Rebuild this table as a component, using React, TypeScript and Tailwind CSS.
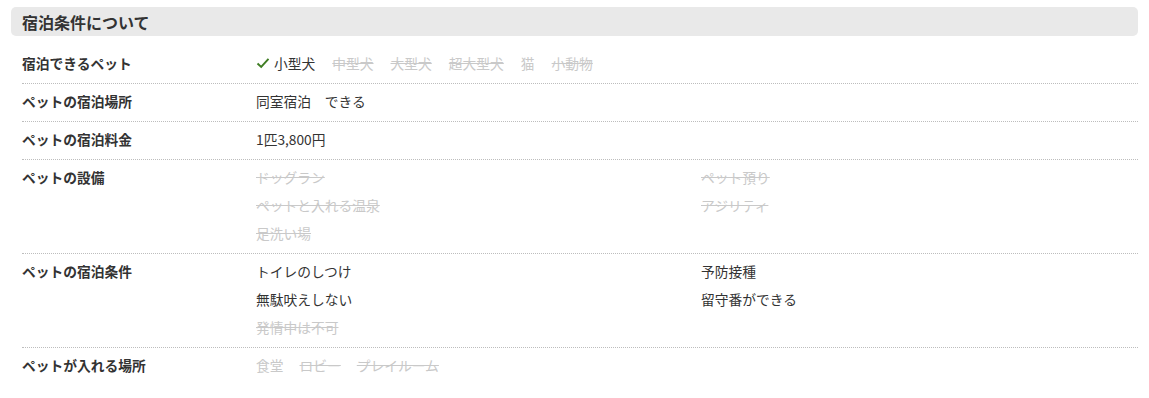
import React from "react";

const Check = () => (
  <svg width="14" height="12" viewBox="0 0 14 12" className="mr-[4px] shrink-0">
    <polyline points="1.5,6.5 5.2,10 12.5,1.8" fill="none" stroke="#3f7d23" strokeWidth="1.9" />
  </svg>
);

const Off = ({ children }: { children: React.ReactNode }) => (
  <span className="text-[#c9c9c9] line-through decoration-[#c9c9c9]">{children}</span>
);

const Row = ({ label, children, last }: { label: string; children: React.ReactNode; last?: boolean }) => (
  <div className={`flex pt-[3px] pb-[6px] ${last ? "" : "border-b border-dotted border-[#bdbdbd]"}`}>
    <div className="w-[234px] shrink-0 font-bold text-[#333] leading-[28px]">{label}</div>
    <div className="flex-1 leading-[28px] text-[#333]">{children}</div>
  </div>
);

export default function App() {
  return (
    <div
      className="bg-white w-[1149px] h-[398px] px-[11px] pt-[7px] text-[13.75px]"
      style={{ fontFamily: '"Noto Sans CJK JP", "Noto Sans", sans-serif' }}
    >
      <div className="h-[29px] rounded-[5px] bg-[#e9e9e9] pl-[11px] flex items-center text-[16px] font-bold text-[#333]">
        宿泊条件について
      </div>
      <div className="mt-[10px] ml-[11px]">
        <Row label="宿泊できるペット">
          <div className="flex items-center gap-x-[17px]">
            <span className="flex items-center">
              <Check />
              小型犬
            </span>
            <Off>中型犬</Off>
            <Off>大型犬</Off>
            <Off>超大型犬</Off>
            <span className="text-[#c9c9c9]">猫</span>
            <Off>小動物</Off>
          </div>
        </Row>
        <Row label="ペットの宿泊場所">
          <span>同室宿泊　できる</span>
        </Row>
        <Row label="ペットの宿泊料金">
          <span>1匹3,800円</span>
        </Row>
        <Row label="ペットの設備">
          <div className="grid grid-cols-[445px_1fr]">
            <div><Off>ドッグラン</Off></div>
            <div><Off>ペット預り</Off></div>
            <div><Off>ペットと入れる温泉</Off></div>
            <div><Off>アジリティ</Off></div>
            <div><Off>足洗い場</Off></div>
          </div>
        </Row>
        <Row label="ペットの宿泊条件">
          <div className="grid grid-cols-[445px_1fr]">
            <div>トイレのしつけ</div>
            <div>予防接種</div>
            <div>無駄吠えしない</div>
            <div>留守番ができる</div>
            <div><Off>発情中は不可</Off></div>
          </div>
        </Row>
        <Row label="ペットが入れる場所" last>
          <div className="flex gap-x-[16px]">
            <span className="text-[#c9c9c9]">食堂</span>
            <Off>ロビー</Off>
            <Off>プレイルーム</Off>
          </div>
        </Row>
      </div>
    </div>
  );
}
